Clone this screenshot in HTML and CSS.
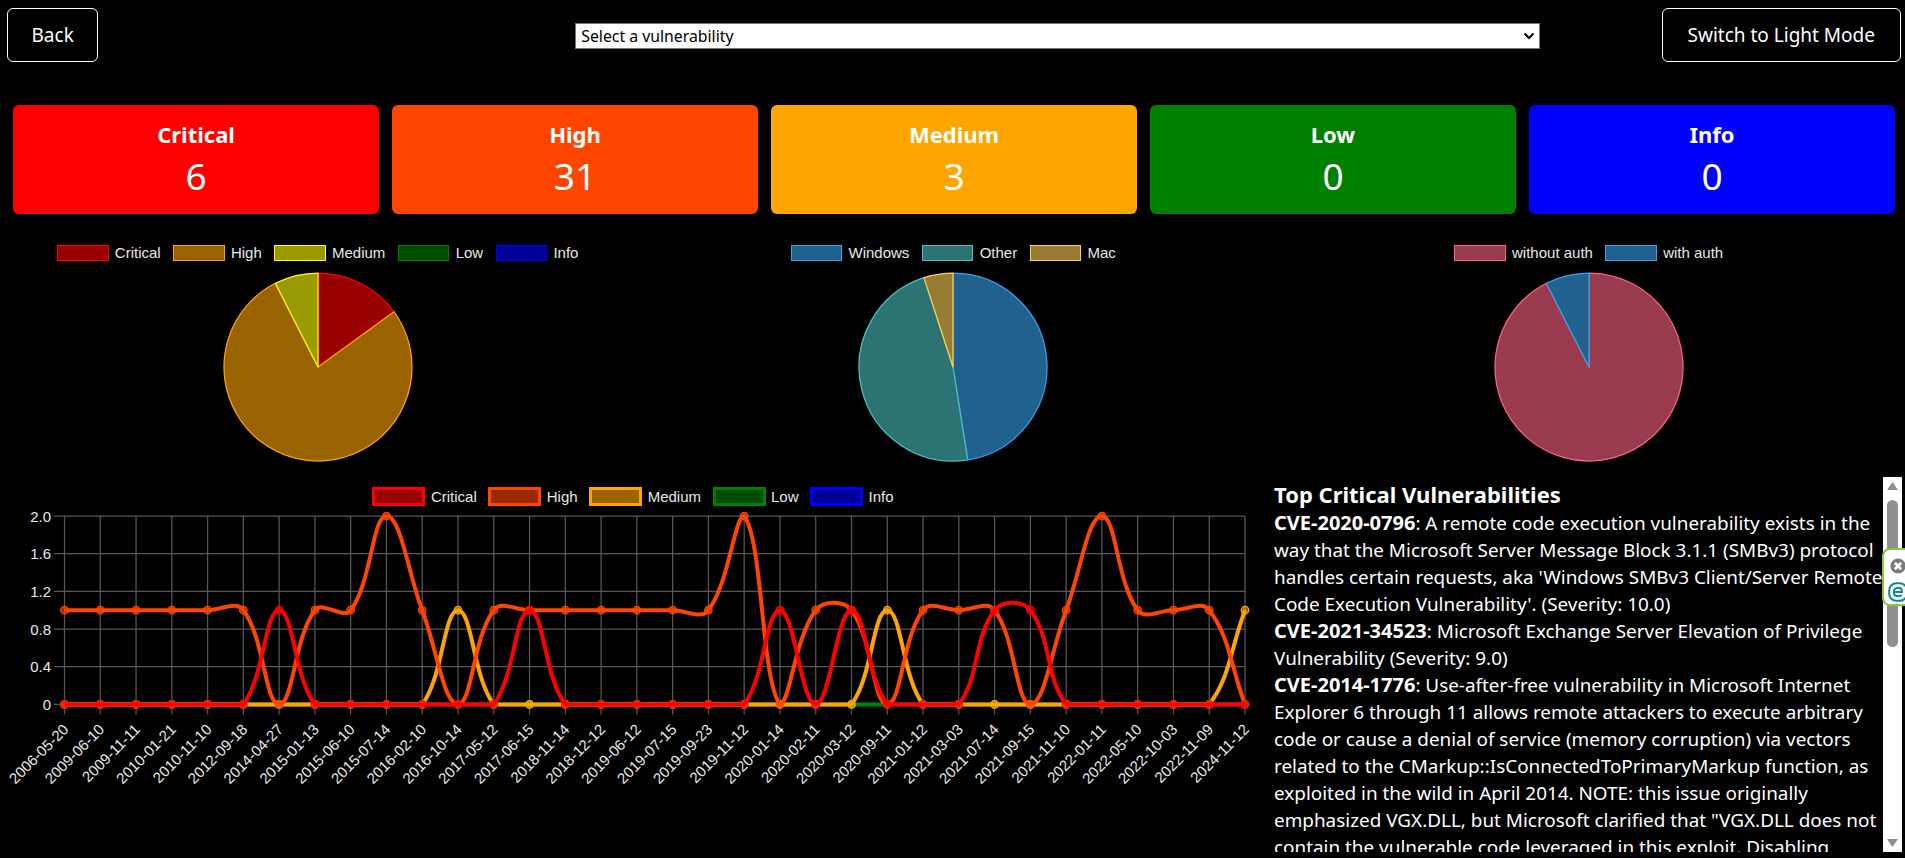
FILE: index.html
```html
<!DOCTYPE html>
<html>
  <head>
    <meta charset="UTF-8" />
    <meta name="viewport" content="width=device-width, initial-scale=1" />
    <title>Vulnerability dashboard</title>
    <link rel="stylesheet" href="styles.css">
  </head>
  <body>
    <div class="header">
      <button class="btn back">Back</button>
      <div class="select-wrap">
        <select class="vuln-select">
          <option>Select a vulnerability</option>
        </select>
        <svg class="chevron" width="12" height="8" viewBox="0 0 12 8">
          <path d="M1.5 1.5 L6 6 L10.5 1.5" fill="none" stroke="#000" stroke-width="2" />
        </svg>
      </div>
      <button class="btn mode">Switch to Light Mode</button>
    </div>

    <div class="cards">
      <div class="card critical"><h3>Critical</h3><p>6</p></div>
      <div class="card high"><h3>High</h3><p>31</p></div>
      <div class="card medium"><h3>Medium</h3><p>3</p></div>
      <div class="card low"><h3>Low</h3><p>0</p></div>
      <div class="card info"><h3>Info</h3><p>0</p></div>
    </div>

    <div class="pies">
      <div class="pie-box">
        <div class="legend">
          <span class="key"><i class="swatch s-red"></i>Critical</span>
          <span class="key"><i class="swatch s-orange"></i>High</span>
          <span class="key"><i class="swatch s-yellow"></i>Medium</span>
          <span class="key"><i class="swatch s-green"></i>Low</span>
          <span class="key"><i class="swatch s-blue"></i>Info</span>
        </div>
        <svg id="pie1" width="190" height="190" viewBox="0 0 190 190"></svg>
      </div>
      <div class="pie-box">
        <div class="legend">
          <span class="key"><i class="swatch s-sky"></i>Windows</span>
          <span class="key"><i class="swatch s-teal"></i>Other</span>
          <span class="key"><i class="swatch s-sand"></i>Mac</span>
        </div>
        <svg id="pie2" width="190" height="190" viewBox="0 0 190 190"></svg>
      </div>
      <div class="pie-box">
        <div class="legend">
          <span class="key"><i class="swatch s-rose"></i>without auth</span>
          <span class="key"><i class="swatch s-sky"></i>with auth</span>
        </div>
        <svg id="pie3" width="190" height="190" viewBox="0 0 190 190"></svg>
      </div>
    </div>

    <div class="bottom">
      <div class="trend">
        <div class="legend">
          <span class="key"><i class="swatch wide l-red"></i>Critical</span>
          <span class="key"><i class="swatch wide l-orangered"></i>High</span>
          <span class="key"><i class="swatch wide l-orange"></i>Medium</span>
          <span class="key"><i class="swatch wide l-green"></i>Low</span>
          <span class="key"><i class="swatch wide l-blue"></i>Info</span>
        </div>
        <svg id="trend" width="1274" height="346" viewBox="0 0 1274 346"></svg>
      </div>

      <div class="top-list">
        <div class="top-text">
          <h3>Top Critical Vulnerabilities</h3>
          <div><b>CVE-2020-0796</b>: A remote code execution vulnerability exists in the way that the Microsoft Server Message Block 3.1.1 (SMBv3) protocol handles certain requests, aka 'Windows SMBv3 Client/Server Remote Code Execution Vulnerability'. (Severity: 10.0)</div>
          <div><b>CVE-2021-34523</b>: Microsoft Exchange Server Elevation of Privilege Vulnerability (Severity: 9.0)</div>
          <div><b>CVE-2014-1776</b>: Use-after-free vulnerability in Microsoft Internet Explorer 6 through 11 allows remote attackers to execute arbitrary code or cause a denial of service (memory corruption) via vectors related to the CMarkup::IsConnectedToPrimaryMarkup function, as exploited in the wild in April 2014. NOTE: this issue originally emphasized VGX.DLL, but Microsoft clarified that "VGX.DLL does not contain the vulnerable code leveraged in this exploit. Disabling</div>
        </div>
        <div class="scrollbar">
          <svg width="19" height="19" viewBox="0 0 19 19"><path d="M9.5 5 L15 13 L4 13 Z" fill="#8f8f8f" /></svg>
          <div class="thumb"></div>
          <svg class="arrow-down" width="19" height="19" viewBox="0 0 19 19"><path d="M9.5 14 L15 6 L4 6 Z" fill="#8f8f8f" /></svg>
        </div>
      </div>
    </div>

    <div class="eset">
      <svg class="eset-close" width="16" height="16" viewBox="0 0 20 20">
        <circle cx="10" cy="10" r="9.5" fill="#7b7b7b" />
        <path d="M6 6 L14 14 M14 6 L6 14" stroke="#fff" stroke-width="3.4" />
      </svg>
      <svg width="20" height="20" viewBox="0 0 20 20">
        <rect x="1.2" y="1.2" width="17.6" height="17.6" rx="7" fill="none" stroke="#0d8a8c" stroke-width="2" />
        <path d="M5.8 10 H14 C14 7 12.4 5.8 10 5.8 C7.4 5.8 5.8 7.6 5.8 10 C5.8 12.6 7.4 14.2 10 14.2 C11.6 14.2 12.8 13.8 13.8 13" fill="none" stroke="#0d8a8c" stroke-width="2" />
      </svg>
    </div>

    <script src="charts.js"></script>
  </body>
</html>
```

FILE: styles.css
```css
* {
  box-sizing: border-box;
}
body {
  margin: 0px;
  padding: 0px;
  background-color: black;
  color: white;
  font-family: "Noto Sans", sans-serif;
  overflow: hidden;
  height: 858px;
}

.header {
  display: flex;
  align-items: center;
  padding: 8px 4px 0px 7px;
}
.btn {
  height: 54px;
  padding: 0px 25px;
  background-color: black;
  color: white;
  border: 1.25px solid white;
  border-radius: 6px;
  font-family: "Noto Sans", sans-serif;
  font-size: 19px;
}
.back {
  padding: 0px 23.5px;
}
.mode {
  margin-left: auto;
}
.select-wrap {
  position: relative;
  width: 965px;
  height: 26px;
  margin: 1px 0px 0px 477px;
}
.vuln-select {
  appearance: none;
  width: 100%;
  height: 100%;
  padding: 0px 0px 0px 5px;
  background-color: white;
  color: black;
  border: 1.25px solid #767676;
  border-radius: 0px;
  font-family: "Noto Sans", sans-serif;
  font-size: 15.8px;
}
.chevron {
  position: absolute;
  right: 5px;
  top: 9px;
  pointer-events: none;
}

.cards {
  display: flex;
  gap: 13px;
  margin-top: 43px;
  padding: 0px 10px 0px 13px;
}
.card {
  flex: 1;
  height: 109px;
  border-radius: 6px;
  text-align: center;
}
.card h3 {
  margin: 11px 0px 0px 0px;
  font-size: 22px;
  line-height: 36px;
}
.card p {
  margin: 0px;
  font-size: 37px;
  line-height: 48px;
}
.critical { background-color: red; }
.high { background-color: #ff4500; }
.medium { background-color: orange; }
.low { background-color: green; }
.info { background-color: blue; }

.pies {
  display: grid;
  grid-template-columns: repeat(3, 635.5px);
  margin-top: 31px;
}
.pie-box {
  display: flex;
  flex-direction: column;
  align-items: center;
}
.pie-box svg {
  margin-top: 11px;
}

.legend {
  display: flex;
  justify-content: center;
  gap: 12.5px;
  color: #e8e8e8;
  font-family: "Liberation Sans", sans-serif;
  font-size: 15px;
  line-height: 16px;
}
.key {
  display: flex;
  align-items: center;
  gap: 6.25px;
}
.swatch {
  display: block;
  width: 51.5px;
  height: 16px;
  border: 1.25px solid;
}
.swatch.wide {
  width: 53px;
  height: 19px;
  border-width: 3.75px;
}
.s-red { background-color: rgb(153, 0, 0); border-color: red; }
.s-orange { background-color: rgb(153, 99, 0); border-color: orange; }
.s-yellow { background-color: rgb(153, 153, 0); border-color: yellow; }
.s-green { background-color: rgb(0, 77, 0); border-color: green; }
.s-blue { background-color: rgb(0, 0, 153); border-color: blue; }
.s-sky { background-color: rgb(32, 97, 141); border-color: rgb(54, 162, 235); }
.s-teal { background-color: rgb(45, 115, 115); border-color: rgb(75, 192, 192); }
.s-sand { background-color: rgb(153, 124, 52); border-color: rgb(255, 206, 86); }
.s-rose { background-color: rgb(153, 59, 79); border-color: rgb(255, 99, 132); }
.l-red { background-color: rgb(153, 0, 0); border-color: red; }
.l-orangered { background-color: rgb(153, 41, 0); border-color: #ff4500; }
.l-orange { background-color: rgb(153, 99, 0); border-color: orange; }
.l-green { background-color: rgb(0, 77, 0); border-color: green; }
.l-blue { background-color: rgb(0, 0, 153); border-color: blue; }

.bottom {
  display: flex;
  margin-top: 15px;
}
.trend {
  width: 1274px;
  padding-top: 10px;
}
.trend .legend {
  gap: 11.5px;
  line-height: 19px;
  margin-right: 8px;
}
.trend .key {
  gap: 5.5px;
}
.trend svg {
  display: block;
}
.tick {
  fill: #e8e8e8;
  font-family: "Liberation Sans", sans-serif;
  font-size: 15px;
}

.top-list {
  display: flex;
  width: 628px;
  height: 375px;
}
.top-text {
  width: 609px;
  height: 375px;
  overflow: hidden;
  font-size: 18.9px;
  line-height: 27px;
}
.top-text h3 {
  margin: 0px;
  padding-top: 2px;
  font-size: 22px;
  line-height: 31px;
}
.top-text b {
  font-size: 20px;
  line-height: 0;
}
.scrollbar {
  display: flex;
  flex-direction: column;
  width: 19px;
  background-color: white;
}
.thumb {
  width: 11px;
  height: 147px;
  margin: 4px 0px 0px 4px;
  background-color: #8f8f8f;
  border-radius: 6px;
}
.arrow-down {
  margin-top: auto;
}

.eset {
  position: absolute;
  right: 0px;
  top: 548px;
  width: 23px;
  height: 58px;
  padding: 8px 0px 0px 4px;
  display: flex;
  flex-direction: column;
  gap: 8px;
  background-color: white;
  border: 2px solid #8cc63f;
  border-right: none;
  border-radius: 8px 0px 0px 8px;
  overflow: hidden;
}
.eset svg {
  flex: none;
}
.eset-close {
  margin-left: 2px;
}
```

FILE: charts.js
```js
const NS = "http://www.w3.org/2000/svg";

function add(parent, tag, attrs, text) {
  const el = document.createElementNS(NS, tag);
  for (const k in attrs) {
    el.setAttribute(k, attrs[k]);
  }
  if (text !== undefined) {
    el.textContent = text;
  }
  parent.appendChild(el);
  return el;
}

function drawPie(id, slices) {
  const svg = document.getElementById(id);
  const cx = 95;
  const cy = 95;
  const r = 94;
  const total = slices.reduce((sum, s) => sum + s.value, 0);
  let angle = 0;
  slices.forEach((s) => {
    const next = angle + (s.value / total) * Math.PI * 2;
    const x1 = cx + r * Math.sin(angle);
    const y1 = cy - r * Math.cos(angle);
    const x2 = cx + r * Math.sin(next);
    const y2 = cy - r * Math.cos(next);
    const big = next - angle > Math.PI ? 1 : 0;
    add(svg, "path", {
      d: `M${cx} ${cy} L${x1} ${y1} A${r} ${r} 0 ${big} 1 ${x2} ${y2} Z`,
      fill: s.fill,
      stroke: s.line,
      "stroke-width": 1.25,
      "stroke-linejoin": "round",
    });
    angle = next;
  });
}

drawPie("pie1", [
  { value: 6, fill: "rgb(153,0,0)", line: "red" },
  { value: 31, fill: "rgb(153,99,0)", line: "orange" },
  { value: 3, fill: "rgb(153,153,0)", line: "yellow" },
]);
drawPie("pie2", [
  { value: 19, fill: "rgb(32,97,141)", line: "rgb(54,162,235)" },
  { value: 19, fill: "rgb(45,115,115)", line: "rgb(75,192,192)" },
  { value: 2, fill: "rgb(153,124,52)", line: "rgb(255,206,86)" },
]);
drawPie("pie3", [
  { value: 37, fill: "rgb(153,59,79)", line: "rgb(255,99,132)" },
  { value: 3, fill: "rgb(32,97,141)", line: "rgb(54,162,235)" },
]);

const dates = [
  "2006-05-20", "2009-06-10", "2009-11-11", "2010-01-21", "2010-11-10",
  "2012-09-18", "2014-04-27", "2015-01-13", "2015-06-10", "2015-07-14",
  "2016-02-10", "2016-10-14", "2017-05-12", "2017-06-15", "2018-11-14",
  "2018-12-12", "2019-06-12", "2019-07-15", "2019-09-23", "2019-11-12",
  "2020-01-14", "2020-02-11", "2020-03-12", "2020-09-11", "2021-01-12",
  "2021-03-03", "2021-07-14", "2021-09-15", "2021-11-10", "2022-01-11",
  "2022-05-10", "2022-10-03", "2022-11-09", "2024-11-12",
];

const high = [1, 1, 1, 1, 1, 1, 0, 1, 1, 2, 1, 0, 1, 1, 1, 1, 1, 1, 1, 2, 0, 1, 1, 0, 1, 1, 1, 0, 1, 2, 1, 1, 1, 0];
const empty = dates.map(() => 0);
const oneAt = (list) => dates.map((d, i) => (list.includes(i) ? 1 : 0));

// drawn back to front, critical ends up on top
const series = [
  { data: empty, line: "blue", fill: "rgba(0,0,255,0.6)" },
  { data: empty, line: "green", fill: "rgba(0,128,0,0.6)" },
  { data: oneAt([11, 23, 33]), line: "orange", fill: "rgba(255,165,0,0.6)" },
  { data: high, line: "#ff4500", fill: "rgba(255,69,0,0.6)" },
  { data: oneAt([6, 13, 20, 22, 26, 27]), line: "red", fill: "rgba(255,0,0,0.6)" },
];

const trend = document.getElementById("trend");
const left = 64.5;
const right = 1245;
const top_ = 10;
const bottom = 198.4;
const stepX = (right - left) / (dates.length - 1);
const xAt = (i) => left + i * stepX;
const yAt = (v) => bottom - (v / 2) * (bottom - top_);

["0", "0.4", "0.8", "1.2", "1.6", "2.0"].forEach((label) => {
  const y = yAt(parseFloat(label));
  add(trend, "line", { x1: 54, x2: right, y1: y, y2: y, stroke: "#575757", "stroke-width": 1.25 });
  add(trend, "text", { class: "tick", x: 51, y: y + 5.5, "text-anchor": "end" }, label);
});

dates.forEach((d, i) => {
  const x = xAt(i);
  add(trend, "line", { x1: x, x2: x, y1: top_, y2: bottom + 10, stroke: "#575757", "stroke-width": 1.25 });
  add(trend, "text", {
    class: "tick",
    x: x + 5,
    y: bottom + 26,
    "text-anchor": "end",
    transform: `rotate(-45 ${x + 5} ${bottom + 26})`,
  }, d);
});

function clampY(y) {
  return Math.min(bottom, Math.max(top_, y));
}

// same control points a tension 0.4 spline gives
function splinePath(points) {
  const t = 0.4;
  const ctrl = points.map((p, i) => {
    const a = points[i - 1] || p;
    const b = points[i + 1] || p;
    const d1 = Math.hypot(p.x - a.x, p.y - a.y);
    const d2 = Math.hypot(b.x - p.x, b.y - p.y);
    const sum = d1 + d2 || 1;
    const f1 = (t * d1) / sum;
    const f2 = (t * d2) / sum;
    return {
      px: p.x - f1 * (b.x - a.x),
      py: clampY(p.y - f1 * (b.y - a.y)),
      nx: p.x + f2 * (b.x - a.x),
      ny: clampY(p.y + f2 * (b.y - a.y)),
    };
  });
  let d = `M${points[0].x} ${points[0].y}`;
  for (let i = 1; i < points.length; i++) {
    d += ` C${ctrl[i - 1].nx} ${ctrl[i - 1].ny} ${ctrl[i].px} ${ctrl[i].py} ${points[i].x} ${points[i].y}`;
  }
  return d;
}

series.forEach((s) => {
  const points = s.data.map((v, i) => ({ x: xAt(i), y: yAt(v) }));
  add(trend, "path", { d: splinePath(points), fill: "none", stroke: s.line, "stroke-width": 4 });
  points.forEach((p) => {
    add(trend, "circle", { cx: p.x, cy: p.y, r: 3.75, fill: s.fill, stroke: s.line, "stroke-width": 1.25 });
  });
});
```
